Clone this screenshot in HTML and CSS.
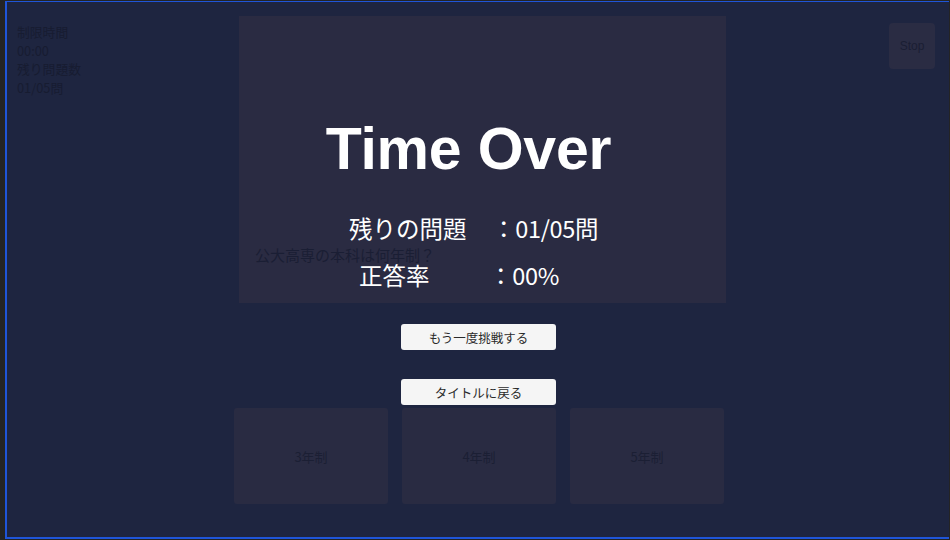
FILE: index.html
```html
<!DOCTYPE html>
<html lang="ja">
<head>
<meta charset="utf-8">
<link rel="stylesheet" href="styles.css">
</head>
<body>
<div class="screen">
  <div class="game">
    <div class="top">
      <div class="hud">
        <div class="hud-label">制限時間</div>
        <div class="hud-value">00:00</div>
        <div class="hud-label">残り問題数</div>
        <div class="hud-value">01/05問</div>
      </div>
      <div class="stop">Stop</div>
    </div>
    <div class="question">公大高専の本科は何年制？</div>
    <div class="choices">
      <div class="choice">3年制</div>
      <div class="choice">4年制</div>
      <div class="choice">5年制</div>
    </div>
  </div>
  <div class="overlay">
    <div class="panel">
      <div class="title">Time Over</div>
      <div class="stats">
        <div class="row row1"><span class="label">残りの問題</span><span class="value">：01/05問</span></div>
        <div class="row row2"><span class="label">正答率</span><span class="value">：00%</span></div>
      </div>
    </div>
    <div class="btn btn1">もう一度挑戦する</div>
    <div class="btn btn2">タイトルに戻る</div>
  </div>
</div>
</body>
</html>
```

FILE: styles.css
```css
html, body {
  margin: 0;
  padding: 0;
}
body {
  width: 950px;
  height: 540px;
  background: #242424;
  overflow: hidden;
  font-family: "Noto Sans CJK JP", "Noto Sans", sans-serif;
}
.screen {
  position: relative;
  box-sizing: border-box;
  margin: 1px 0 0 5px;
  width: 944px;
  height: 538px;
  background: #1e2540;
  border-top: 1px solid #1f55d8;
  border-left: 2px solid #1f55d8;
  border-bottom: 2px solid #1f55d8;
}
.game {
  display: flex;
  flex-direction: column;
  height: 100%;
}
.top {
  display: flex;
  justify-content: space-between;
  align-items: flex-start;
  padding: 21px 14px 0 10px;
}
.hud {
  display: flex;
  flex-direction: column;
  color: #171c31;
  font-size: 12.8px;
  line-height: 18.5px;
}
.stop {
  margin-top: 0;
  width: 46px;
  height: 46px;
  border-radius: 4px;
  background: #2a2c43;
  color: #1a1e33;
  font-size: 12px;
  display: flex;
  align-items: center;
  justify-content: center;
  font-family: "Liberation Sans", sans-serif;
}
.question {
  position: relative;
  z-index: 1;
  margin: 147px 0 0 248px;
  color: #1a1e34;
  font-size: 15px;
  line-height: 22px;
}
.choices {
  display: flex;
  gap: 14px;
  margin: 142px 0 0 227px;
}
.choice {
  width: 154px;
  height: 96px;
  background: #292b42;
  border-radius: 3px;
  display: flex;
  align-items: center;
  justify-content: center;
  color: #1b1f34;
  font-size: 13px;
}
.overlay {
  position: absolute;
  inset: 0;
  display: flex;
  flex-direction: column;
  align-items: flex-start;
}
.panel {
  margin: 14px 0 0 232px;
  width: 487px;
  height: 287px;
  background: #2a2b42;
  display: flex;
  flex-direction: column;
  color: #ffffff;
}
.title {
  margin-top: 99px;
  padding-right: 28px;
  text-align: center;
  font-family: "Liberation Sans", Arial, sans-serif;
  font-weight: bold;
  font-size: 59px;
  line-height: 68px;
  letter-spacing: -0.2px;
}
.stats {
  margin-top: 29px;
  display: flex;
  flex-direction: column;
  gap: 15px;
}
.row {
  display: flex;
  font-size: 23.5px;
  line-height: 32px;
}
.row1 .label { margin-left: 110px; width: 143px; }
.row2 .label { margin-left: 120px; width: 130px; }
.value {
  letter-spacing: -0.3px;
}
.btn {
  width: 155px;
  height: 26px;
  border-radius: 3px;
  background: #f5f5f5;
  color: #2a2a2a;
  font-size: 12.5px;
  display: flex;
  align-items: center;
  justify-content: center;
  margin-left: 394px;
}
.btn1 { margin-top: 21px; }
.btn2 { margin-top: 29px; }
```
